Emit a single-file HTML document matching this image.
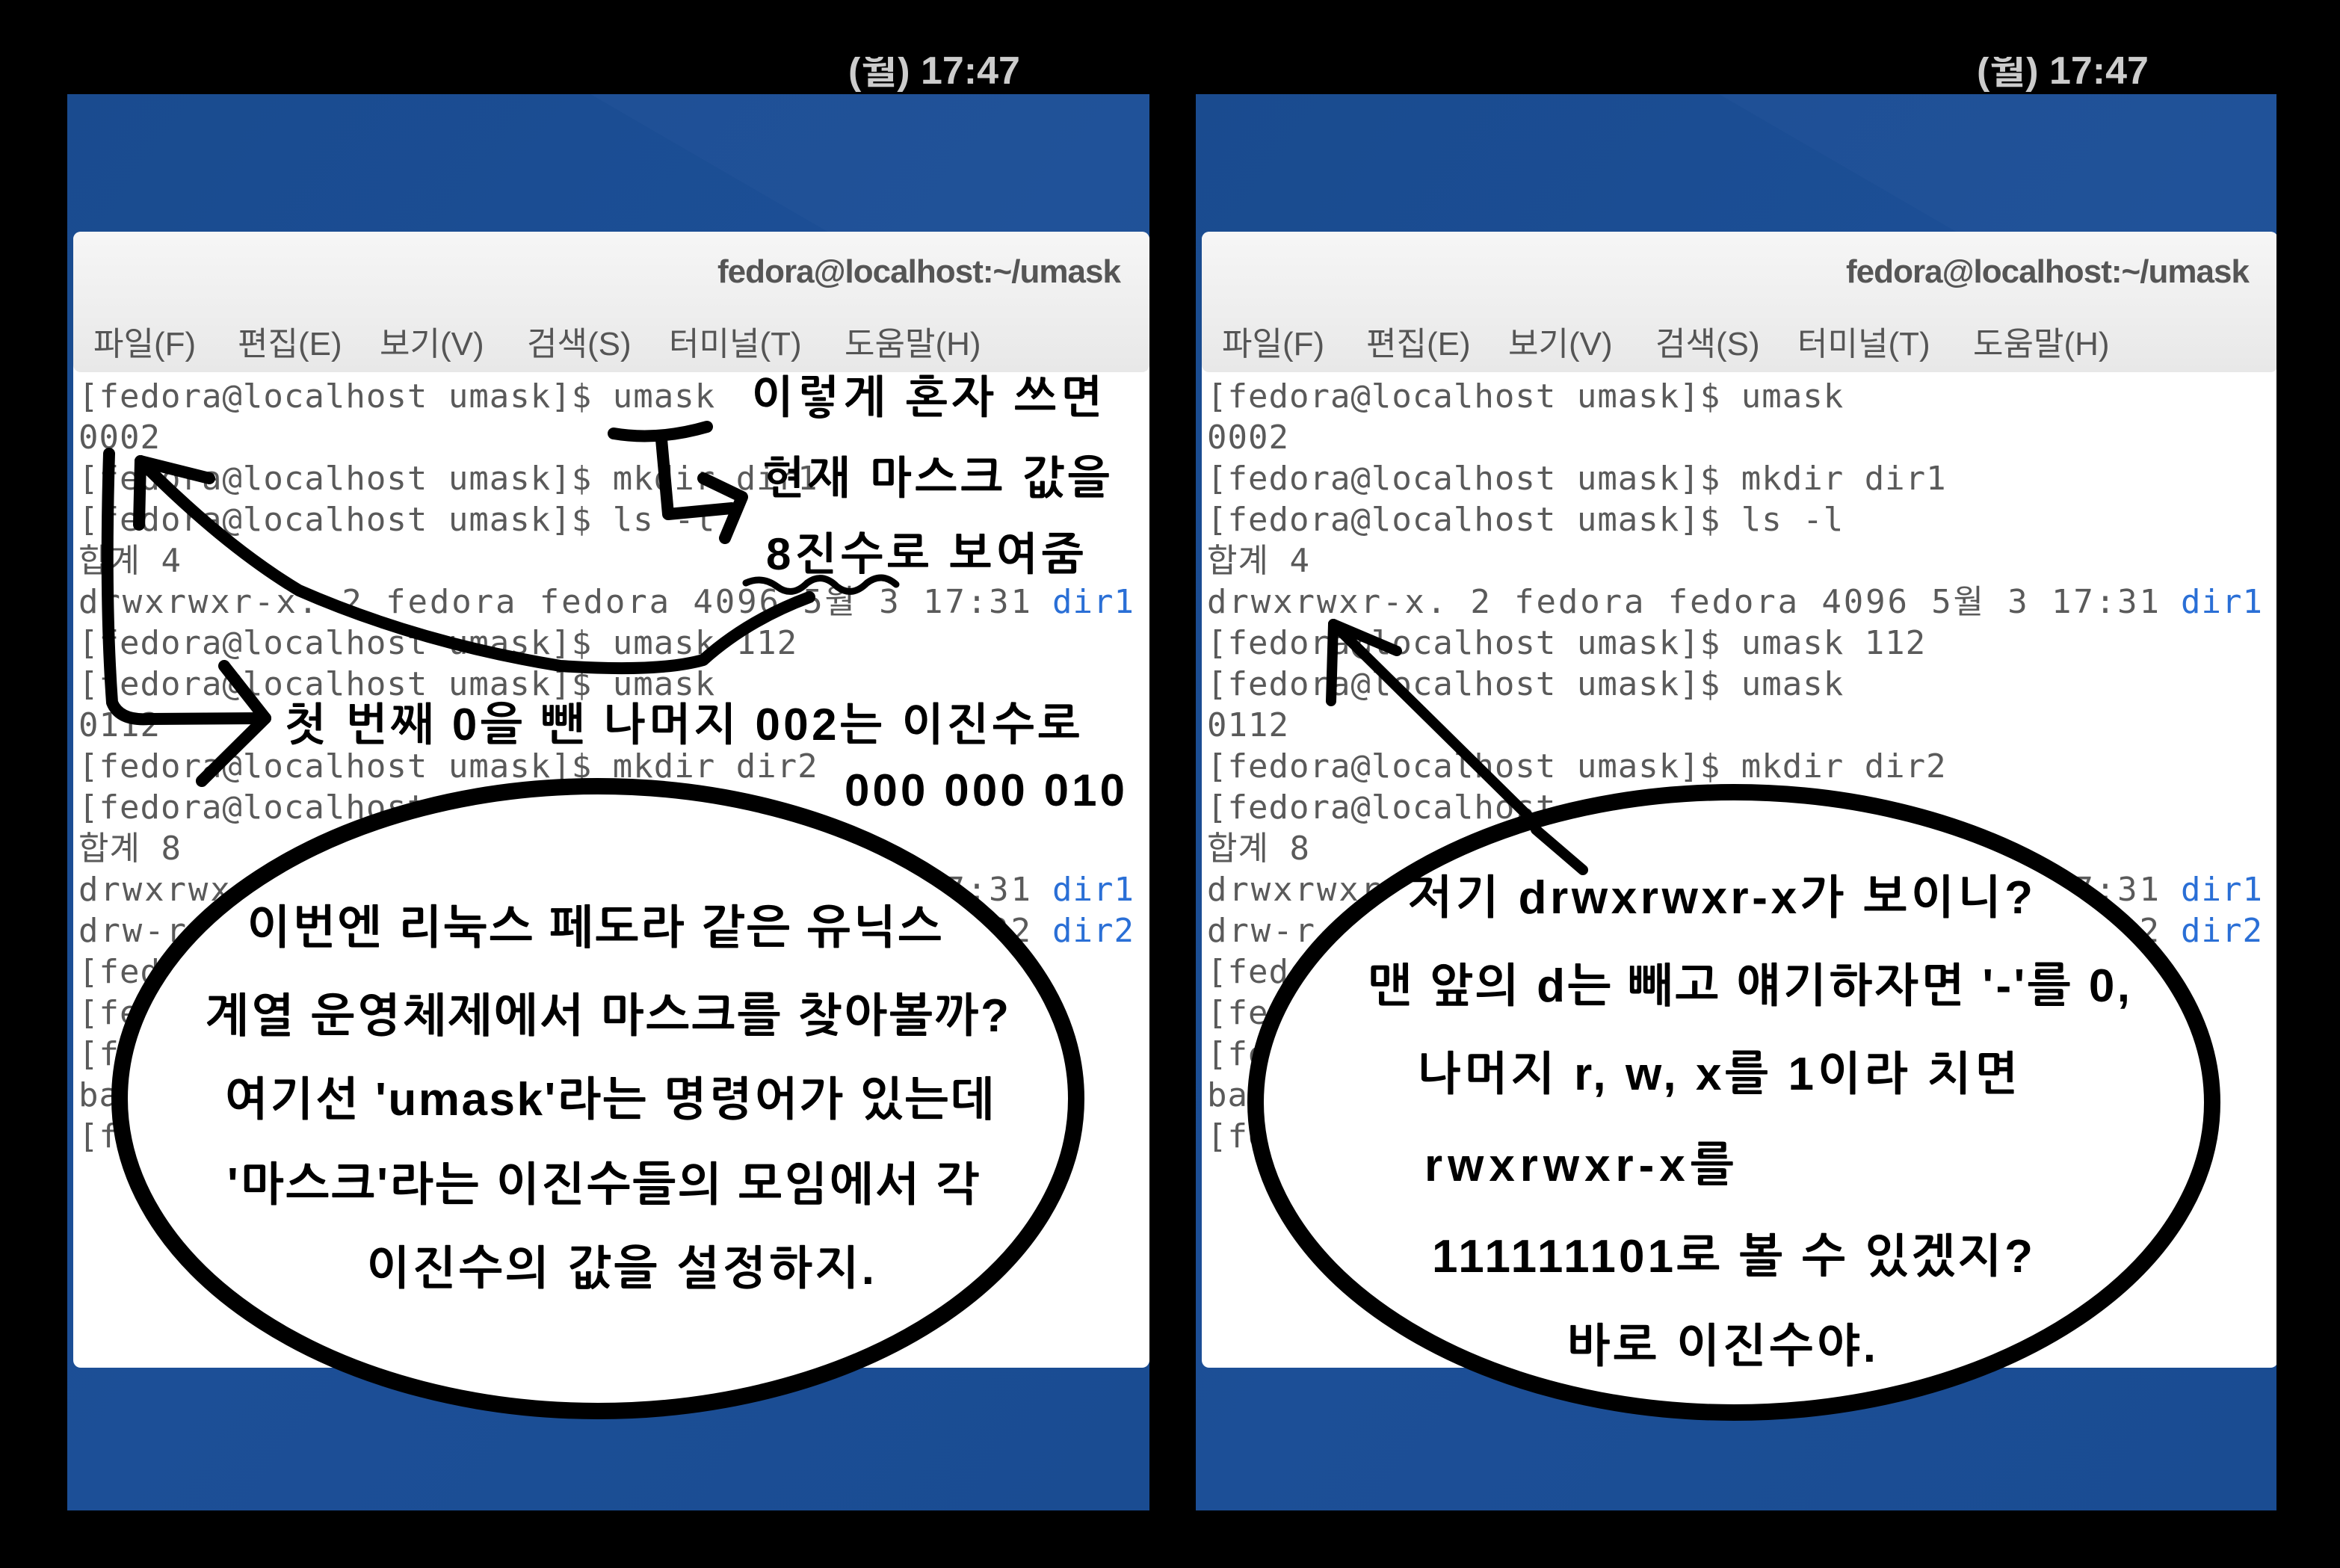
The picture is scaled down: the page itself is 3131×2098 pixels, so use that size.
<!DOCTYPE html>
<html><head><meta charset="utf-8"><style>
html,body{margin:0;padding:0;background:#000;}
svg{display:block}
.t{font-family:"DejaVu Sans Mono","Liberation Mono","Noto Sans CJK KR",monospace;font-size:44px;fill:#5a5a5a;letter-spacing:1px}
.b{fill:#2a6fd6}
.m{font-family:"Liberation Sans","Noto Sans CJK KR",sans-serif;font-size:44px;fill:#555}
.h{font-family:"Liberation Sans","NanumGothic","Noto Sans CJK KR",sans-serif;font-size:60px;fill:#000;font-weight:bold}
</style></head><body>
<svg width="3131" height="2098" viewBox="0 0 3131 2098" xmlns="http://www.w3.org/2000/svg">
<defs>
<linearGradient id="bg" x1="0" y1="0" x2="1" y2="1">
<stop offset="0" stop-color="#1a4b8f"/><stop offset="0.5" stop-color="#1c4f97"/><stop offset="1" stop-color="#1a4c92"/>
</linearGradient>
<linearGradient id="tb" x1="0" y1="0" x2="0" y2="1">
<stop offset="0" stop-color="#f6f6f6"/><stop offset="1" stop-color="#e8e8e8"/>
</linearGradient>
<g id="term">
<rect x="0" y="126" width="1448" height="1895" fill="url(#bg)"/>
<path d="M700 126 L1448 126 L1448 560 Z" fill="#2a5aa0" opacity="0.25"/>
<rect x="8" y="310" width="1440" height="1520" fill="#fff" rx="10"/>
<rect x="8" y="310" width="1440" height="188" fill="url(#tb)" rx="10"/>
<text x="1410" y="378" text-anchor="end" font-family="Liberation Sans Narrow,Liberation Sans,sans-serif" font-weight="bold" font-size="44" fill="#555" textLength="540">fedora@localhost:~/umask</text>
<text class="m" x="35" y="475">파일(F)</text>
<text class="m" x="228" y="475">편집(E)</text>
<text class="m" x="418" y="475">보기(V)</text>
<text class="m" x="615" y="475">검색(S)</text>
<text class="m" x="805" y="475">터미널(T)</text>
<text class="m" x="1040" y="475">도움말(H)</text>
<g class="t">
<text x="15" y="545">[fedora@localhost umask]$ umask</text>
<text x="15" y="600">0002</text>
<text x="15" y="655">[fedora@localhost umask]$ mkdir dir1</text>
<text x="15" y="710">[fedora@localhost umask]$ ls -l</text>
<text x="15" y="765">합계 4</text>
<text x="15" y="820" textLength="1275">drwxrwxr-x. 2 fedora fedora 4096  5월  3 17:31</text><text class="t b" x="1318" y="820">dir1</text>
<text x="15" y="875">[fedora@localhost umask]$ umask 112</text>
<text x="15" y="930">[fedora@localhost umask]$ umask</text>
<text x="15" y="985">0112</text>
<text x="15" y="1040">[fedora@localhost umask]$ mkdir dir2</text>
<text x="15" y="1095">[fedora@localhost umask]$ ls -l</text>
<text x="15" y="1150">합계 8</text>
<text x="15" y="1205" textLength="1275">drwxrwxr-x. 2 fedora fedora 4096  5월  3 17:31</text><text class="t b" x="1318" y="1205">dir1</text>
<text x="15" y="1260" textLength="1275">drw-r--r--. 2 fedora fedora 4096  5월  3 17:32</text><text class="t b" x="1318" y="1260">dir2</text>
<text x="15" y="1315">[fedora@localhost umask]$</text>
<text x="15" y="1370">[fedora@localhost umask]$</text>
<text x="15" y="1425">[fedora@localhost umask]$</text>
<text x="15" y="1480">bash</text>
<text x="15" y="1535">[fedora@localhost umask]$</text>
</g>
</g>
</defs>
<rect width="3131" height="2098" fill="#000"/>
<text x="1250" y="112" fill="#ccc" font-family="Liberation Sans,Noto Sans CJK KR,sans-serif" font-size="52" font-weight="bold" text-anchor="middle">(월) 17:47</text>
<text x="2760" y="112" fill="#ccc" font-family="Liberation Sans,Noto Sans CJK KR,sans-serif" font-size="52" font-weight="bold" text-anchor="middle">(월) 17:47</text>
<rect x="0" y="0" width="3131" height="76" fill="#000"/>
<use href="#term" x="90" y="0"/>
<use href="#term" x="1600" y="0"/>
<rect x="3046" y="100" width="85" height="1998" fill="#000"/>

<!-- left annotations -->
<g class="h">
<text x="1005" y="552" textLength="470">이렇게 혼자 쓰면</text>
<text x="1020" y="660" textLength="465">현재 마스크 값을</text>
<text x="1025" y="762" textLength="425">8진수로 보여줌</text>
<text x="380" y="990" textLength="1065">첫 번째 0을 뺀 나머지 002는 이진수로</text>
<text x="1130" y="1078" textLength="375">000 000 010</text>
</g>
<g fill="none" stroke="#000" stroke-width="16" stroke-linecap="round" stroke-linejoin="round">
<path d="M821 580 Q880 590 946 571"/>
<path d="M885 588 L894 688 L979 680"/>
<path d="M941 640 L993 665 L970 720"/>
<path d="M998 780 Q1020 770 1040 785 Q1060 800 1080 780 Q1100 765 1120 785 Q1140 800 1160 780 Q1180 765 1199 782" stroke-width="9"/>
<path d="M1083 799 Q1000 830 941 883 Q880 900 750 891 Q560 860 400 790 Q300 730 188 617"/>
<path d="M188 617 L186 702"/><path d="M188 617 L280 640"/>
<path d="M146 607 Q140 800 150 940 Q160 965 200 962 L355 961"/>
<path d="M300 891 L355 961 L270 1045"/>
</g>
<ellipse cx="800" cy="1470" rx="640" ry="418" fill="#fff" stroke="#000" stroke-width="22"/>
<g class="h" style="font-size:62px">
<text x="330" y="1262" textLength="930">이번엔 리눅스 페도라 같은 유닉스</text>
<text x="274" y="1380" textLength="1076">계열 운영체제에서 마스크를 찾아볼까?</text>
<text x="300" y="1492" textLength="1030">여기선 'umask'라는 명령어가 있는데</text>
<text x="304" y="1606" textLength="1006">'마스크'라는 이진수들의 모임에서 각</text>
<text x="490" y="1718" textLength="680">이진수의 값을 설정하지.</text>
</g>

<!-- right annotations -->
<g fill="none" stroke="#000" stroke-width="14" stroke-linecap="round" stroke-linejoin="round">
<path d="M2118 1164 L1784 835"/>
<path d="M1784 835 L1781 938"/><path d="M1784 835 L1869 871"/>
</g>
<ellipse cx="2320" cy="1475" rx="640" ry="415" fill="#fff" stroke="#000" stroke-width="22"/>
<g fill="none" stroke="#000" stroke-width="14" stroke-linecap="round"><path d="M2055 1110 L2118 1164"/></g>
<g class="h" style="font-size:62px">
<text x="1884" y="1222" textLength="836">저기 drwxrwxr-x가 보이니?</text>
<text x="1830" y="1340" textLength="1020">맨 앞의 d는 빼고 얘기하자면 '-'를 0,</text>
<text x="1896" y="1458" textLength="804">나머지 r, w, x를 1이라 치면</text>
<text x="1906" y="1580" textLength="414">rwxrwxr-x를</text>
<text x="1916" y="1702" textLength="804">111111101로 볼 수 있겠지?</text>
<text x="2096" y="1822" textLength="414">바로 이진수야.</text>
</g>
</svg>
</body></html>
